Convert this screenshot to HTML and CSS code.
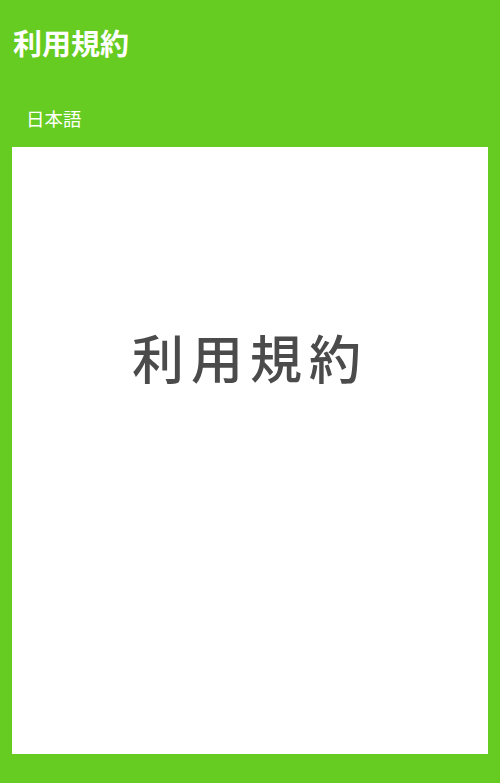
FILE: index.html
```html
<!DOCTYPE html>
<html lang="ja">
<head>
<meta charset="utf-8">
<title>利用規約</title>
<link rel="stylesheet" href="styles.css">
</head>
<body>
<header class="header">
  <h1 class="title">利用規約</h1>
  <div class="tab">日本語</div>
</header>
<main class="panel">
  <p class="panel-title">利用規約</p>
</main>
</body>
</html>
```

FILE: styles.css
```css
html, body {
  margin: 0;
  padding: 0;
}
body {
  background: #66cc21;
  font-family: "Noto Sans CJK JP", "Noto Sans", sans-serif;
  width: 500px;
  height: 783px;
  overflow: hidden;
}
.header {
  display: flex;
  flex-direction: column;
}
.title {
  margin: 0;
  padding: 20px 13px 28px;
  font-size: 29px;
  line-height: 44px;
  font-weight: 700;
  color: #ffffff;
}
.tab {
  padding-left: 26px;
  padding-bottom: 3px;
  font-size: 18.5px;
  line-height: 52px;
  color: #ffffff;
}
.panel {
  margin: 0 12px;
  height: 607px;
  background: #ffffff;
  box-sizing: border-box;
  padding-top: 180px;
}
.panel-title {
  margin: 0;
  text-align: center;
  font-size: 52px;
  font-weight: 500;
  line-height: 60px;
  letter-spacing: 7px;
  color: #4b4b4b;
}
```
